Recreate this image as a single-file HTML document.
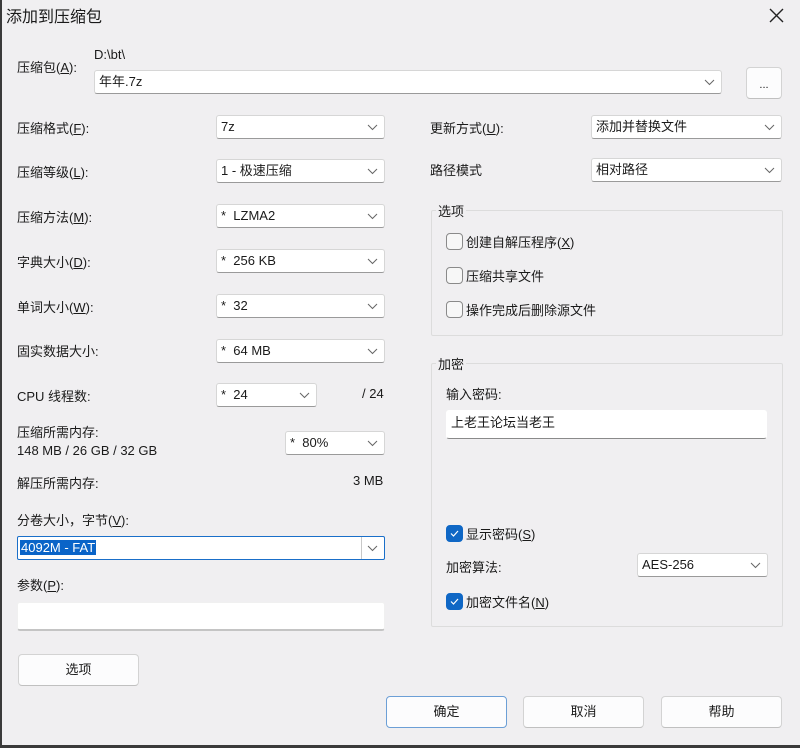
<!DOCTYPE html>
<html><head><meta charset="utf-8"><style>
*{box-sizing:border-box;margin:0;padding:0}
body{width:800px;height:748px;background:#f0eff1;font-family:"Liberation Sans","Noto Sans CJK SC",sans-serif;font-size:13px;color:#1a1a1a;position:relative;overflow:hidden}
.a{position:absolute;white-space:nowrap}
.cb{position:absolute;background:#fff;border:1px solid #d6d6d6;border-bottom-color:#9a9a9a;border-radius:3px;height:24px;line-height:22px;padding-left:4px}
.cb svg{position:absolute;right:6px;top:8px}
.btn{position:absolute;background:#fcfcfd;border:1px solid #d3d3d3;border-bottom-color:#c0c0c0;border-radius:4px;text-align:center;height:32px;line-height:30px}
.grp{position:absolute;border:1px solid #dcdcdc;border-radius:2px}
.chk{position:absolute;width:17px;height:17px;border:1px solid #8a8a8a;border-radius:4px;background:#f7f7f7}
.chk.on{background:#0f67c5;border-color:#0f67c5}
.lb{position:absolute;background:#f0eff1;padding:0 2px}
u{text-decoration:underline}
</style></head><body>
<div class="a" style="left:0;top:0;width:2px;height:748px;background:#3a3a3a"></div>
<div class="a" style="left:0;top:745px;width:800px;height:3px;background:#3a3a3a"></div>
<div class="a" style="left:6px;top:3px;font-size:16px">添加到压缩包</div>
<svg class="a" style="left:769px;top:8px" width="15" height="15"><path d="M1 1L14 14M14 1L1 14" stroke="#222" stroke-width="1.4"/></svg>

<div class="a" style="left:17px;top:57px">压缩包(<u>A</u>):</div>
<div class="a" style="left:94px;top:47px">D:\bt\</div>
<div class="cb" style="left:94px;top:70px;width:628px;height:24px">年年.7z<svg width="11" height="7"><path d="M1 1L5.5 5.5L10 1" stroke="#666" fill="none"/></svg></div>
<div class="btn" style="left:746px;top:67px;width:36px;height:32px;line-height:34px;font-size:11px">...</div>

<div class="a" style="left:17px;top:118px">压缩格式(<u>F</u>):</div>
<div class="cb" style="left:216px;top:115px;width:169px">7z<svg width="11" height="7"><path d="M1 1L5.5 5.5L10 1" stroke="#666" fill="none"/></svg></div>
<div class="a" style="left:17px;top:162px">压缩等级(<u>L</u>):</div>
<div class="cb" style="left:216px;top:159px;width:169px">1 - 极速压缩<svg width="11" height="7"><path d="M1 1L5.5 5.5L10 1" stroke="#666" fill="none"/></svg></div>
<div class="a" style="left:17px;top:207px">压缩方法(<u>M</u>):</div>
<div class="cb" style="left:216px;top:204px;width:169px">*&nbsp; LZMA2<svg width="11" height="7"><path d="M1 1L5.5 5.5L10 1" stroke="#666" fill="none"/></svg></div>
<div class="a" style="left:17px;top:252px">字典大小(<u>D</u>):</div>
<div class="cb" style="left:216px;top:249px;width:169px">*&nbsp; 256 KB<svg width="11" height="7"><path d="M1 1L5.5 5.5L10 1" stroke="#666" fill="none"/></svg></div>
<div class="a" style="left:17px;top:297px">单词大小(<u>W</u>):</div>
<div class="cb" style="left:216px;top:294px;width:169px">*&nbsp; 32<svg width="11" height="7"><path d="M1 1L5.5 5.5L10 1" stroke="#666" fill="none"/></svg></div>
<div class="a" style="left:17px;top:341px">固实数据大小:</div>
<div class="cb" style="left:216px;top:339px;width:169px">*&nbsp; 64 MB<svg width="11" height="7"><path d="M1 1L5.5 5.5L10 1" stroke="#666" fill="none"/></svg></div>
<div class="a" style="left:17px;top:386px">CPU 线程数:</div>
<div class="cb" style="left:216px;top:383px;width:101px">*&nbsp; 24<svg width="11" height="7"><path d="M1 1L5.5 5.5L10 1" stroke="#666" fill="none"/></svg></div>
<div class="a" style="left:362px;top:386px">/ 24</div>
<div class="a" style="left:17px;top:422px">压缩所需内存:</div>
<div class="a" style="left:17px;top:443px">148 MB / 26 GB / 32 GB</div>
<div class="cb" style="left:285px;top:431px;width:100px">*&nbsp; 80%<svg width="11" height="7"><path d="M1 1L5.5 5.5L10 1" stroke="#666" fill="none"/></svg></div>
<div class="a" style="left:17px;top:473px">解压所需内存:</div>
<div class="a" style="left:353px;top:473px">3 MB</div>
<div class="a" style="left:17px;top:510px">分卷大小，字节(<u>V</u>):</div>
<div class="cb" style="left:17px;top:536px;width:368px;border:1px solid #1a6fc9;border-radius:2px;padding-left:2px"><span style="background:#0a64c8;color:#fff;padding:0 1px">4092M - FAT</span><div class="a" style="left:343px;top:0;width:1px;height:22px;background:#c8c8c8"></div><svg width="11" height="7"><path d="M1 1L5.5 5.5L10 1" stroke="#666" fill="none"/></svg></div>
<div class="a" style="left:17px;top:575px">参数(<u>P</u>):</div>
<div class="cb" style="left:17px;top:602px;width:368px;height:29px;border-bottom:2px solid #c4c4c4;border-color:#f0f0f0 #f0f0f0 #c4c4c4"></div>
<div class="btn" style="left:18px;top:654px;width:121px">选项</div>

<div class="a" style="left:430px;top:118px">更新方式(<u>U</u>):</div>
<div class="cb" style="left:591px;top:115px;width:191px">添加并替换文件<svg width="11" height="7"><path d="M1 1L5.5 5.5L10 1" stroke="#666" fill="none"/></svg></div>
<div class="a" style="left:430px;top:160px">路径模式</div>
<div class="cb" style="left:591px;top:158px;width:191px">相对路径<svg width="11" height="7"><path d="M1 1L5.5 5.5L10 1" stroke="#666" fill="none"/></svg></div>

<div class="grp" style="left:431px;top:210px;width:352px;height:126px"></div>
<div class="lb" style="left:436px;top:201px">选项</div>
<div class="chk" style="left:446px;top:233px"></div><div class="a" style="left:466px;top:232px">创建自解压程序(<u>X</u>)</div>
<div class="chk" style="left:446px;top:267px"></div><div class="a" style="left:466px;top:266px">压缩共享文件</div>
<div class="chk" style="left:446px;top:301px"></div><div class="a" style="left:466px;top:300px">操作完成后删除源文件</div>

<div class="grp" style="left:431px;top:363px;width:352px;height:264px"></div>
<div class="lb" style="left:436px;top:354px">加密</div>
<div class="a" style="left:446px;top:384px">输入密码:</div>
<div class="cb" style="left:446px;top:410px;width:321px;height:29px;line-height:24px;border-color:#fff #fff #8a8a8a;padding-left:4px">上老王论坛当老王</div>
<div class="chk on" style="left:446px;top:525px"><svg width="15" height="15" style="position:absolute;left:0;top:0"><path d="M4 7.5L6.5 10L11 5" stroke="#fff" fill="none" stroke-width="1.2"/></svg></div><div class="a" style="left:466px;top:524px">显示密码(<u>S</u>)</div>
<div class="a" style="left:446px;top:557px">加密算法:</div>
<div class="cb" style="left:637px;top:553px;width:131px">AES-256<svg width="11" height="7"><path d="M1 1L5.5 5.5L10 1" stroke="#666" fill="none"/></svg></div>
<div class="chk on" style="left:446px;top:593px"><svg width="15" height="15" style="position:absolute;left:0;top:0"><path d="M4 7.5L6.5 10L11 5" stroke="#fff" fill="none" stroke-width="1.2"/></svg></div><div class="a" style="left:466px;top:592px">加密文件名(<u>N</u>)</div>

<div class="btn" style="left:386px;top:696px;width:121px;border:1px solid #6c9fd6">确定</div>
<div class="btn" style="left:523px;top:696px;width:121px">取消</div>
<div class="btn" style="left:661px;top:696px;width:121px">帮助</div>
</body></html>
